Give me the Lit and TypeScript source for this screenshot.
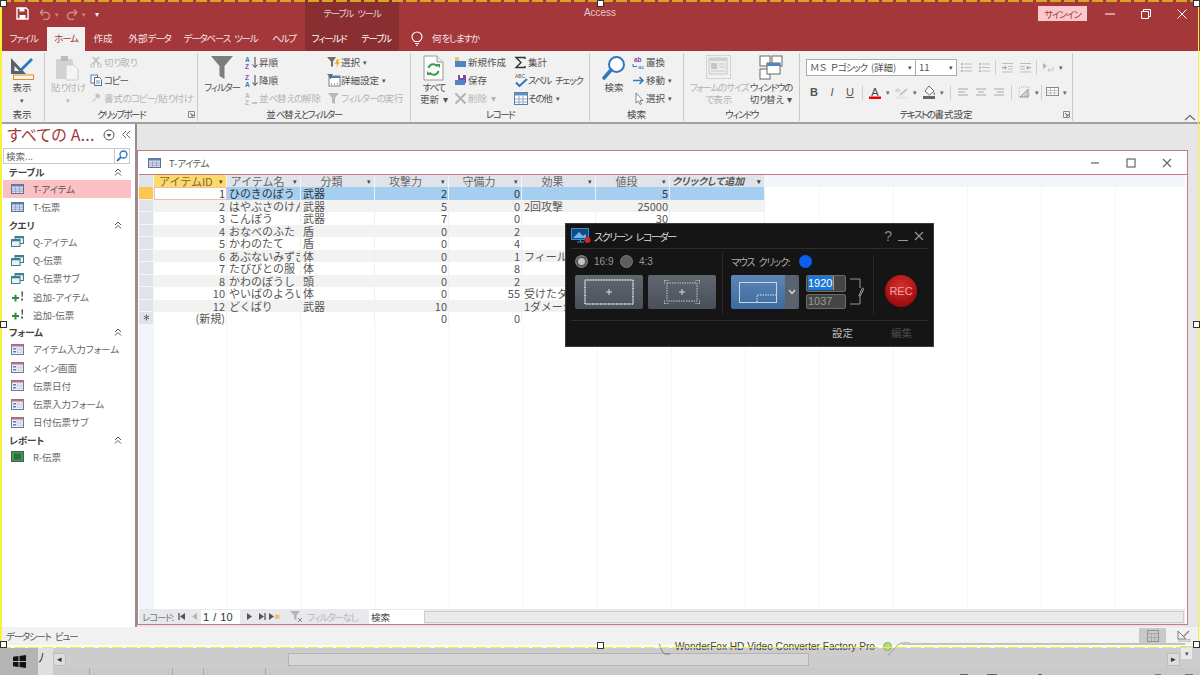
import { LitElement, html, css, svg } from "lit";
import { customElement } from "lit/decorators.js";

const ic = (w: number, h: number, body: any, cls = "") => html`<svg class=${cls} width=${w} height=${h} viewBox="0 0 ${w} ${h}">${body}</svg>`;

/* Kana in the original UI font is much narrower than in Noto: tighten only kana runs. */
const k = (s: string) => s.split(/([\u3040-\u30ff]+)/).map((p, i) => (i % 2 ? html`<span class="k">${p}</span>` : p));

const I = {
  save: ic(13, 13, svg`<path d="M1 1h9l2 2v9H1z" fill="none" stroke="#fff" stroke-width="1.4"/><rect x="3.5" y="1" width="5" height="3.5" fill="#fff"/><rect x="3.5" y="8" width="6" height="4" fill="#fff"/>`),
  undo: ic(14, 12, svg`<path d="M2 4.5h6a3.5 3.5 0 0 1 0 7H5M2 4.5l3-3M2 4.5l3 3" fill="none" stroke="#c98b8c" stroke-width="1.5"/>`),
  redo: ic(14, 12, svg`<path d="M12 4.5H6a3.5 3.5 0 0 0 0 7h3M12 4.5l-3-3M12 4.5l-3 3" fill="none" stroke="#c98b8c" stroke-width="1.5"/>`),
  bulb: ic(12, 15, svg`<path d="M3.5 10.5C2 9 1 8 1 6a5 5 0 0 1 10 0c0 2-1 3-2.5 4.500z" fill="none" stroke="#fff" stroke-width="1.1"/><path d="M4 12.500h4M5 14.300h2" stroke="#fff" stroke-width="1.100"/>`),
  view: ic(26, 26, svg`<path d="M2 3v16h15z M5.500 11v5h5z" fill="#596067" fill-rule="evenodd"/><path d="M11 14 22 3l2 2-11 11-3 1z" fill="#2f79c2"/><rect x="4.500" y="20" width="20" height="4.500" fill="#fff6e6" stroke="#e58a2e"/>`),
  paste: ic(26, 26, svg`<rect x="1" y="4" width="17" height="20" rx="1.500" fill="#d2d2d2"/><rect x="6" y="1" width="7" height="5" fill="#bcbcbc"/><path d="M11 10h8l4 4v11H11z" fill="#f4f4f4" stroke="#cfcfcf"/>`),
  cut: ic(12, 12, svg`<path d="M3 1l6 7M9 1L3 8" stroke="#b8b8b8" stroke-width="1.200"/><circle cx="2.500" cy="9.500" r="1.800" fill="none" stroke="#b8b8b8"/><circle cx="9.500" cy="9.500" r="1.800" fill="none" stroke="#b8b8b8"/>`),
  copy: ic(12, 12, svg`<rect x="1" y="1" width="6.500" height="8" fill="#fff" stroke="#5a7ea3"/><path d="M4.500 3.500h5l2 2v6h-7z" fill="#fff" stroke="#5a6b7d"/><path d="M6 7h4M6 9h4" stroke="#6a8fb5"/>`),
  brush: ic(12, 12, svg`<path d="M7 1l4 3-3 3-3-3z" fill="#c4c4c4"/><path d="M5 5 1 11l5-3z" fill="#d4d4d4"/>`),
  filter: ic(24, 25, svg`<path d="M1 1h22L14.500 11v13l-5-3V11z" fill="#7d7d7d"/>`),
  asc: ic(13, 13, svg`<text x="0" y="6" font-size="6.500" font-weight="700" fill="#2f79c2" font-family="Liberation Sans">A</text><text x="0" y="12.500" font-size="6.500" font-weight="700" fill="#8e4bb5" font-family="Liberation Sans">Z</text><path d="M10 1v10M7.500 8.500 10 11.500l2.500-3" fill="none" stroke="#444"/>`),
  desc: ic(13, 13, svg`<text x="0" y="6" font-size="6.500" font-weight="700" fill="#8e4bb5" font-family="Liberation Sans">Z</text><text x="0" y="12.500" font-size="6.500" font-weight="700" fill="#2f79c2" font-family="Liberation Sans">A</text><path d="M10 1v10M7.500 8.500 10 11.500l2.500-3" fill="none" stroke="#444"/>`),
  clr: ic(13, 13, svg`<text x="0" y="6" font-size="6.500" font-weight="700" fill="#b9b9b9" font-family="Liberation Sans">A</text><text x="0" y="12.500" font-size="6.500" font-weight="700" fill="#b9b9b9" font-family="Liberation Sans">Z</text><path d="M7 11h5" stroke="#c4c4c4" stroke-width="2"/>`),
  fsel: ic(14, 13, svg`<path d="M0 1h9L6 5.500V11L4 10V5.500z" fill="#6f6f6f"/><path d="M10 3 8 8h2l-1 4 4-6h-2l1-3z" fill="#e9b22c"/>`),
  fadv: ic(14, 13, svg`<rect x="2" y="2" width="11" height="10" fill="#fff" stroke="#6c8299"/><rect x="2" y="2" width="11" height="2" fill="#4f7fb0"/><path d="M0 0h6L4 3v2L3 5V3z" fill="#666"/><path d="M4 10h1M7 10h1M10 10h1" stroke="#555"/>`),
  frun: ic(13, 13, svg`<path d="M1 1h11L8 6v6L5 10.500V6z" fill="#b9b9b9"/>`),
  refresh: ic(22, 26, svg`<path d="M1 1h13l6 6v18H1z" fill="#fbfbfb" stroke="#9a9a9a"/><path d="M14 1v6h6" fill="#eee" stroke="#9a9a9a"/><path d="M5.500 13a5 5 0 0 1 9-1.500M15.500 16a5 5 0 0 1-9 1.500" fill="none" stroke="#3d9d4a" stroke-width="2"/><path d="M13 9h4v4zM8 20H4v-4z" fill="#3d9d4a"/>`),
  nw: ic(13, 13, svg`<rect x="1" y="5" width="11" height="6" fill="#4f86c2"/><rect x="1" y="1" width="4" height="4" fill="#e9c46a"/>`),
  sv: ic(13, 13, svg`<rect x="4" y="1" width="8" height="8" fill="#7d4bb0"/><rect x="6" y="1" width="3" height="3" fill="#fff"/><rect x="1" y="6" width="10" height="5" fill="#4f86c2"/>`),
  del: ic(13, 13, svg`<path d="M1.500 1.500l10 10M11.500 1.500l-10 10" stroke="#b0b0b0" stroke-width="1.800"/>`),
  sum: ic(13, 13, svg`<path d="M11 3V1.500H2L7 6.500 2 11.500h9V10" fill="none" stroke="#333" stroke-width="1.400"/>`),
  spell: ic(15, 14, svg`<text x="1" y="5" font-size="5" fill="#555" font-family="Liberation Sans">ABC</text><path d="M2 9.500 5.500 13 13 6" fill="none" stroke="#2f79c2" stroke-width="2"/>`),
  more: ic(14, 13, svg`<rect x=".5" y=".5" width="13" height="12" fill="#fff" stroke="#5f7f9f"/><rect x=".5" y=".5" width="13" height="3" fill="#5f8fbf"/><path d="M5 4v8M9 4v8M1 7h12M1 10h12" stroke="#8fa9c3"/>`),
  find: ic(24, 26, svg`<circle cx="14.500" cy="9.500" r="7.500" fill="#fff" stroke="#2f79c2" stroke-width="2"/><path d="M9 15 2 23" stroke="#2f79c2" stroke-width="3.500" stroke-linecap="round"/>`),
  replace: ic(14, 13, svg`<text x="2" y="5.500" font-size="6.500" font-weight="700" fill="#7d4bb0" font-family="Liberation Sans">ab</text><text x="6" y="12.500" font-size="6" fill="#2f79c2" font-family="Liberation Sans">ac</text><path d="M1 8v2.500h4" fill="none" stroke="#2f79c2"/>`),
  go: ic(14, 13, svg`<path d="M1 6.500h10M7.500 3l3.500 3.500L7.500 10" fill="none" stroke="#2f79c2" stroke-width="1.500"/>`),
  cursor: ic(14, 13, svg`<path d="M4 1v10l2.500-2 1.500 3.500 1.500-.7L8 8.500h3z" fill="#fff" stroke="#666" stroke-width=".8"/>`),
  formfit: ic(26, 25, svg`<rect x=".5" y=".5" width="24" height="23" fill="none" stroke="#c4c4c4" stroke-dasharray="2 1"/><rect x="3" y="3" width="18" height="16" fill="#ececec" stroke="#c8c8c8"/><rect x="3" y="3" width="18" height="3" fill="#cfcfcf"/><rect x="5" y="8" width="6" height="6" fill="#c4c4c4"/><path d="M13 9h6M13 12h6M5 16h14" stroke="#c8c8c8"/>`),
  winsw: ic(24, 25, svg`<rect x="1" y="1" width="10" height="10" fill="#fff" stroke="#666"/><rect x="13" y="1" width="10" height="10" fill="#fff" stroke="#666"/><rect x="1" y="14" width="10" height="10" fill="#fff" stroke="#666"/><rect x="8" y="8" width="13" height="11" fill="#fff" stroke="#666"/><rect x="8" y="8" width="13" height="3" fill="#4f86c2"/>`),
  bul: ic(13, 11, svg`<path d="M4 2h8M4 5.500h8M4 9h8" stroke="#bdbdbd"/><path d="M1 1h2v2H1zM1 4.500h2v2H1zM1 8h2v2H1z" fill="#b9b9b9"/>`),
  ind1: ic(13, 11, svg`<path d="M1 1.500h11M7 4.500h5M7 7h5M1 10h11" stroke="#bdbdbd"/><path d="M1 5.700h4M3.500 4 5.500 5.700 3.500 7.500" fill="none" stroke="#7f9fbf"/>`),
  ind2: ic(13, 11, svg`<path d="M1 1.500h11M1 4.500h5M1 7h5M1 10h11" stroke="#bdbdbd"/><path d="M12 5.700H8M9.500 4 7.500 5.700 9.500 7.500" fill="none" stroke="#7f9fbf"/>`),
  rtl: ic(13, 11, svg`<path d="M1 1l4 3-4 3z" fill="#b5b5b5"/><path d="M11 5v3H6M7.500 6 6 8l1.500 2" fill="none" stroke="#c4c4c4"/>`),
  fcolor: ic(14, 13, svg`<text x="7" y="9.500" text-anchor="middle" font-size="11" fill="#444" font-family="Liberation Sans">A</text><rect x="1" y="10.500" width="12" height="2.500" fill="#e00"/>`),
  hl: ic(14, 13, svg`<text x="0" y="6" font-size="5" fill="#bbb" font-family="Liberation Sans">ab</text><path d="M5 9l7-6" stroke="#c4c4c4" stroke-width="2"/><rect x="1" y="10.500" width="12" height="2.500" fill="#e9e3ea"/>`),
  fill: ic(14, 14, svg`<path d="M7 1l5 5-4.500 4L3 6z" fill="#fff" stroke="#666"/><path d="M12 7c1 1.500 1.500 2 .7 2.800-.8.500-1.500-.3-.7-2.800z" fill="#2f79c2"/><rect x="1" y="11" width="12" height="3" fill="#666"/>`),
  al1: ic(12, 11, svg`<path d="M1 2h10M1 5h7M1 8h10" stroke="#aaa" stroke-width="1.100"/>`),
  al2: ic(12, 11, svg`<path d="M1 2h10M3 5h6M1 8h10" stroke="#aaa" stroke-width="1.100"/>`),
  al3: ic(12, 11, svg`<path d="M1 2h10M4 5h7M1 8h10" stroke="#aaa" stroke-width="1.100"/>`),
  gl: ic(12, 12, svg`<path d="M1 1h10v10H1z" fill="none" stroke="#b8b8b8" stroke-dasharray="1 1"/><path d="M2 11 10 3v8z" fill="#cfcfcf" stroke="#777" stroke-width=".6"/>`),
  alt: ic(13, 11, svg`<rect x=".5" y=".5" width="12" height="8" fill="#fff" stroke="#888"/><path d="M.5 3.500h12M.5 6h12M4.500 1v8M8.500 1v8" stroke="#aaa" stroke-width=".7"/>`),
  launch: ic(7, 7, svg`<path d="M.5 .5h6v6h-6z" fill="none" stroke="#8a8a8a"/><path d="M2 2l3 3M5 3v2H3" fill="none" stroke="#666"/>`),
  chev: ic(12, 7, svg`<path d="M1 6l5-4.500L11 6" fill="none" stroke="#666" stroke-width="1.100"/>`),
  minW: ic(10, 10, svg`<path d="M0 5h10" stroke="#fff"/>`),
  resW: ic(10, 10, svg`<path d="M.5 2.500h7v7h-7zM2.500 2.500v-2h7v7h-2" fill="none" stroke="#fff"/>`),
  closeW: ic(10, 10, svg`<path d="M.5 .5l9 9M9.500 .5l-9 9" stroke="#fff"/>`),
  minK: ic(10, 10, svg`<path d="M1 5h8" stroke="#666" stroke-width="1.200"/>`),
  maxK: ic(10, 10, svg`<rect x="1" y="1" width="8" height="8" fill="none" stroke="#666" stroke-width="1.200"/>`),
  closeK: ic(10, 10, svg`<path d="M1 1l8 8M9 1l-8 8" stroke="#666" stroke-width="1.100"/>`),
  closeD: ic(10, 10, svg`<path d="M1 1l8 8M9 1l-8 8" stroke="#999" stroke-width="1.100"/>`),
  tbl: ic(13, 10, svg`<rect x=".5" y=".5" width="12" height="9" fill="#d8def0" stroke="#5f6f92"/><rect x=".5" y=".5" width="12" height="2" fill="#5f7fae"/><path d="M4.500 2.500v7M8.500 2.500v7M1 5h11M1 7.300h11" stroke="#8a9ac0" stroke-width=".7"/>`),
  qry: ic(13, 11, svg`<rect x="4" y=".5" width="8.500" height="7" fill="#e8f2f4" stroke="#3e7f8e"/><rect x="4" y=".5" width="8.500" height="1.800" fill="#3e7f8e"/><rect x=".5" y="3.500" width="8.500" height="7" fill="#e8f2f4" stroke="#3e7f8e"/><rect x=".5" y="3.500" width="8.500" height="1.800" fill="#3e7f8e"/>`),
  app: ic(13, 11, svg`<path d="M3 3h2.500V.8h2V3H10v2H7.500v2.500h-2V5H3z" fill="#2f8a3d" transform="translate(-2 3)"/><path d="M10.500 .5 12 .5 11.500 6h-.8z M10.300 7.500h1.500v2h-1.500z" fill="#333"/>`),
  frm: ic(13, 11, svg`<rect x=".5" y=".5" width="12" height="10" fill="#eef1f7" stroke="#6a7a9a"/><rect x=".5" y=".5" width="12" height="2" fill="#c26a86"/><rect x="2" y="4" width="3" height="1.500" fill="#5f7fae"/><rect x="2" y="7" width="3" height="1.500" fill="#5f7fae"/><rect x="6" y="4" width="5" height="1.500" fill="#fff" stroke="#8a9ac0" stroke-width=".4"/><rect x="6" y="7" width="5" height="1.500" fill="#fff" stroke="#8a9ac0" stroke-width=".4"/>`),
  rpt: ic(13, 11, svg`<rect x=".5" y=".5" width="12" height="10" fill="#3f9a52" stroke="#555"/><rect x="3" y="2.500" width="7" height="6" fill="#2c6f3b"/>`),
  magS: ic(12, 12, svg`<circle cx="7.500" cy="4.500" r="3.500" fill="#fff" stroke="#2f79c2" stroke-width="1.300"/><path d="M5 7 1 11" stroke="#2f79c2" stroke-width="1.800"/>`),
  ddC: ic(12, 12, svg`<circle cx="6" cy="6" r="5" fill="none" stroke="#555"/><path d="M3.500 5h5L6 8z" fill="#555"/>`),
  dbl: ic(10, 9, svg`<path d="M5 1 1.500 4.500 5 8M9 1 5.500 4.500 9 8" fill="none" stroke="#666"/>`),
  dblUp: ic(8, 8, svg`<path d="M1 4l3-3 3 3M1 7.500l3-3 3 3" fill="none" stroke="#555"/>`),
  star: ic(7, 7, svg`<path d="M3.500 .5v6M.8 2l5.400 3M6.200 2 .8 5" stroke="#666"/>`),
  win: ic(13, 13, svg`<path d="M0 1.800 5.500 1v5H0zM6.500 .9 13 0v6H6.500zM0 7h5.500v5L0 11.200zM6.500 7H13v6l-6.500-.9z" fill="#111"/>`),
  first: ic(8, 7, svg`<path d="M1 0v7" stroke="#555" stroke-width="1.300"/><path d="M7 0v7L2 3.500z" fill="#555"/>`),
  prev: ic(6, 7, svg`<path d="M5 0v7L0 3.500z" fill="#b5b5b5"/>`),
  next: ic(6, 7, svg`<path d="M1 0v7l5-3.500z" fill="#555"/>`),
  last: ic(8, 7, svg`<path d="M1 0v7l5-3.500z" fill="#555"/><path d="M7 0v7" stroke="#555" stroke-width="1.300"/>`),
  newr: ic(11, 7, svg`<path d="M0 0v7l5-3.500z" fill="#555"/><rect x="6" y="1.500" width="4.500" height="4.500" fill="#f0c070"/>`),
  fno: ic(13, 12, svg`<path d="M0 0h10L6.500 4.500V9L4 8V4.500z" fill="#b5b5b5"/><path d="M8 7l4 4M12 7l-4 4" stroke="#888"/>`),
  ds: ic(12, 12, svg`<rect x=".5" y=".5" width="11" height="11" fill="none" stroke="#8f8f8f"/><path d="M.5 3.500h11M4.500 3.500v8M8 3.500v8M.5 7.500h11" stroke="#9f9f9f" stroke-width=".7"/>`),
  ds2: ic(14, 12, svg`<path d="M1 1v8h8z" fill="none" stroke="#7d7d7d"/><path d="M6 7 12 1" stroke="#8a8a8a" stroke-width="1.500"/><rect x="2" y="9.500" width="11" height="2.500" fill="#ddd" stroke="#999" stroke-width=".5"/>`),
  rec: ic(21, 16, svg`<rect x=".5" y=".5" width="17" height="11" fill="#174a7c" stroke="#2f8fe0"/><path d="M2 10 8 4l4 4 3-2v4z" fill="#6fb7ef"/><path d="M6 14h7M9.500 12v2" stroke="#2f8fe0"/><circle cx="16.500" cy="12" r="3" fill="#d0242a"/>`),
  area1: ic(50, 26, svg`<rect x="1" y="1" width="48" height="24" fill="none" stroke="#c8c8c8" stroke-width="2" stroke-dasharray="1 .6"/><path d="M22 13h6M25 10v6" stroke="#ddd"/>`),
  area2: ic(36, 24, svg`<rect x="3" y="3" width="30" height="18" fill="none" stroke="#c8c8c8" stroke-dasharray="1.500 1"/><path d="M0 4V0h5M31 0h5v4M36 20v4h-5M5 24H0v-4" fill="none" stroke="#ccc"/><path d="M15 12h6M18 9v6" stroke="#ddd"/>`),
  split: ic(38, 21, svg`<rect x=".5" y=".5" width="37" height="20" fill="none" stroke="#c8d4e2"/><path d="M18 20v-7h19.500" fill="none" stroke="#dde4ec" stroke-dasharray="1.500 1"/>`),
  dchev: ic(8, 6, svg`<path d="M1 1l3 3.500L7 1" fill="none" stroke="#ddd" stroke-width="1.300"/>`),
  bracket: ic(18, 28, svg`<path d="M1 1h10v9M1 26h10v-9" fill="none" stroke="#999"/><path d="M10 17.500l3-7c1-1 2 0 1.500 1l-3 6c-.7 1-2 .8-1.500 0z" fill="none" stroke="#aaa"/>`),
  tabL: ic(12, 12, svg`<path d="M1 0c2 3 2 8 6 10h5" fill="none" stroke="#666" stroke-width=".8"/>`),
  tabR: ic(22, 14, svg`<path d="M0 13C5 10 8 2 14 1h8" fill="none" stroke="#9a9a9a" stroke-width="1"/>`),
};

const big = (icon: any, lines: string[], arrow: boolean, cls: string, dim = false) => html`
  <div class="big ${cls} ${dim ? "dim" : ""}">
    <div class="bigi">${icon}</div>
    ${lines.map((l) => html`<div class="bl">${k(l)}</div>`)}
    ${arrow ? html`<div class="car">▾</div>` : ""}
  </div>`;
const small = (icon: any, label: string, arrow = false, dim = false) => html`
  <div class="sm ${dim ? "dim" : ""}"><span class="smi">${icon}</span><span>${k(label)}</span>${arrow ? html`<span class="ca">▾</span>` : ""}</div>`;
const tb = (icon: any, arrow = false) => html`<span class="tb">${icon}</span>${arrow ? html`<span class="ca2">▾</span>` : ""}`;

const group = (title: string, body: any, cls: string, launcher = false) => html`
  <section class="grp">
    <div class="gbody ${cls}">${body}</div>
    <div class="gt">${k(title)}${launcher ? html`<span class="launch">${I.launch}</span>` : ""}</div>
  </section>`;

type NavItem = { h?: string; i?: any; t?: string; sel?: boolean };
const nav: NavItem[] = [
  { h: "テーブル" }, { i: I.tbl, t: "T-アイテム", sel: true }, { i: I.tbl, t: "T-伝票" },
  { h: "クエリ" }, { i: I.qry, t: "Q-アイテム" }, { i: I.qry, t: "Q-伝票" }, { i: I.qry, t: "Q-伝票サブ" }, { i: I.app, t: "追加-アイテム" }, { i: I.app, t: "追加-伝票" },
  { h: "フォーム" }, { i: I.frm, t: "アイテム入力フォーム" }, { i: I.frm, t: "メイン画面" }, { i: I.frm, t: "伝票日付" }, { i: I.frm, t: "伝票入力フォーム" }, { i: I.frm, t: "日付伝票サブ" },
  { h: "レポート" }, { i: I.rpt, t: "R-伝票" },
];

const heads = ["アイテムID", "アイテム名", "分類", "攻撃力", "守備力", "効果", "値段", "クリックして追加"];
const rows: string[][] = [
  ["1", "ひのきのぼう", "武器", "2", "0", "", "5"],
  ["2", "はやぶさのけん", "武器", "5", "0", "2回攻撃", "25000"],
  ["3", "こんぼう", "武器", "7", "0", "", "30"],
  ["4", "おなべのふた", "盾", "0", "2", "", ""],
  ["5", "かわのたて", "盾", "0", "4", "", ""],
  ["6", "あぶないみずぎ", "体", "0", "1", "フィールド", ""],
  ["7", "たびびとの服", "体", "0", "8", "", ""],
  ["8", "かわのぼうし", "頭", "0", "2", "", ""],
  ["10", "やいばのよろい", "体", "0", "55", "受けたダメージ", ""],
  ["12", "どくばり", "武器", "10", "", "1ダメージ", ""],
  ["(新規)", "", "", "0", "0", "", ""],
];
const rightCols = [0, 3, 4, 6];

@customElement("app-root")
export class AppRoot extends LitElement {
  static styles = css`
    :host { display: block; width: 1200px; height: 675px; position: relative; overflow: hidden; background: #e6e6e6;
      font-family: "Noto Sans CJK JP", "Noto Sans", sans-serif; font-size: 9.5px; color: #505050; font-feature-settings: "palt"; word-spacing: 2px; }
    * { box-sizing: border-box; }
    svg { display: block; flex: none; }
    .k { letter-spacing: -1.2px; }
    .app { display: grid; grid-template-rows: 27px 24px 73px 503px 18px 30px; height: 675px; }

    .title { display: flex; background: #a4373a; color: #fff; }
    .qat { width: 305px; display: flex; align-items: center; padding-left: 16px; }
    .qat svg { margin-right: 3px; }
    .qat .gap9 { width: 6px; }
    .qat .sp { width: 10px; color: #c98b8c; font-size: 7px; }
    .qat .d { color: #eee; font-size: 8px; margin-left: 3px; }
    .tool { width: 94px; background: #8a2f31; display: flex; align-items: center; justify-content: center; color: #e6cfd0; font-size: 9.5px; padding-bottom: 2px; }
    .apptitle { width: 402px; display: flex; align-items: center; justify-content: center; color: #e6c8c9; font-size: 10px; font-family: "Liberation Sans", sans-serif; padding-bottom: 2px; }
    .right { flex: 1; display: flex; align-items: center; padding-left: 237px; }
    .signin { width: 49px; height: 15px; background: #fbc8cb; color: #a4373a; font-size: 9.5px; display: flex; align-items: center; justify-content: center; margin-right: 5px; }
    .wb { width: 36px; display: flex; justify-content: center; }

    .tabs { display: grid; grid-template-columns: 47px 38px 36px 57px 85px 42px 48px 46px 1fr; background: #a4373a; color: #f6e6e6; }
    .tab { display: flex; align-items: center; justify-content: center; font-size: 9.5px; padding-bottom: 2px; white-space: pre; }
    .tab.on { background: #f1f1f1; color: #a4373a; }
    .tab.ctx { background: #8a2f31; color: #fff; }
    .tell { display: flex; align-items: center; padding-left: 12px; gap: 9px; font-size: 9.5px; padding-bottom: 2px; }

    .ribbon { display: grid; grid-template-columns: 45px 153px 213px 179px 94px 116px 273px 1fr; background: #f1f1f1; border-bottom: 2px solid #a0a0a0; position: relative; }
    .grp { margin: 2px 0 1px; border-right: 1px solid #c9c9c9; display: grid; grid-template-rows: 1fr 13px; min-width: 0; }
    .gbody { display: flex; min-width: 0; }
    .gt { text-align: center; font-size: 9.5px; line-height: 13px; position: relative; color: #444; }
    .gt .k { letter-spacing: -1.5px; }
    .launch { position: absolute; right: 2px; top: 3px; }
    .big { display: flex; flex-direction: column; align-items: center; line-height: 11.5px; font-size: 9.5px; white-space: nowrap; }
    .bigi { height: 29px; padding-top: 2px; }
    .car { font-size: 7px; line-height: 9px; color: #555; margin-top: 2px; }
    .bl { height: 11.5px; }
    .dim { color: #b4b4b4; }
    .dim .car { color: #b4b4b4; }
    .col { display: grid; grid-template-rows: repeat(3, 18px); }
    .sm { display: flex; align-items: center; white-space: nowrap; font-size: 9.5px; }
    .smi { width: 14px; flex: none; }
    .ca { font-size: 7px; margin-left: 3px; color: #555; }
    .g-view { justify-content: center; }
    .w-view { width: 44px; }
    .g-clip { padding-left: 7px; gap: 6px; }
    .w-32 { width: 32px; }
    .g-sort { padding-left: 8px; }
    .g-sort .col:nth-child(2) { width: 82px; margin-left: 7px; }
    .g-rec { padding-left: 10px; }
    .w-26 { width: 26px; }
    .g-rec .c1 { width: 60px; margin-left: 7px; }
    .g-find { padding-left: 11px; }
    .g-find .col { margin-left: 5px; }
    .g-win { padding-left: 2px; }
    .w-66 { width: 66px; }
    .w-38 { width: 38px; }
    .g-text { flex-direction: column; padding-left: 6px; }
    .tr1 { display: flex; align-items: center; height: 18px; margin-top: 5px; }
    .tr2 { display: flex; align-items: center; height: 18px; margin-top: 7px; margin-left: -1px; }
    .fsel { width: 110px; height: 17px; background: #fff; border: 1px solid #ababab; display: flex; align-items: center; justify-content: space-between; padding: 0 3px; font-size: 9.5px; }
    .fsize { width: 42px; margin-left: -1px; }
    .fsel i { font-style: normal; font-size: 7px; }
    .tb { width: 18px; display: flex; justify-content: center; align-items: center; font-family: "Liberation Sans", sans-serif; font-size: 11px; color: #555; flex: none; }
    .tb.b { font-weight: 700; }
    .tb.ii { font-style: italic; }
    .tb.u { text-decoration: underline; }
    .ca2 { font-size: 7px; color: #666; width: 10px; text-align: center; flex: none; margin-left: -1px; }
    .tsep { width: 1px; height: 15px; background: #d0d0d0; margin: 0 3px; flex: none; }
    .tsep.m2 { margin: 0 2px; }
    .tsep.tight { margin: 0 1px 0 -1px; }
    .collapse { position: absolute; right: 4px; bottom: 1px; }

    .main { display: flex; min-height: 0; }
    .nav { width: 137px; background: #fff; border-right: 2px solid #8f8f8f; padding: 1px 4px 0 3px; overflow: hidden; }
    .navh { display: flex; align-items: center; height: 19px; padding-left: 4px; }
    .navh b { font-weight: 400; color: #a4373a; font-size: 16px; width: 96px; white-space: nowrap; line-height: 19px; word-spacing: 0; letter-spacing: .2px; }
    .navh svg:nth-of-type(1) { margin-right: 6px; }
    .navs { margin-top: 4px; height: 16px; width: 127px; border: 1px solid #c8c8c8; display: flex; align-items: center; justify-content: space-between; padding: 0 1px 0 2px; font-size: 9.5px; color: #666; }
    .navs span:last-child { border-left: 1px solid #c8c8c8; height: 14px; padding: 1px 0 0 1px; }
    .nh { height: 16px; display: flex; align-items: center; justify-content: space-between; padding: 0 9px 0 6px; font-weight: 700; font-size: 9.5px; color: #444; }
    .ni { height: 18.3px; display: flex; align-items: center; padding-left: 8px; gap: 9px; font-size: 9.5px; color: #666; width: 128px; }
    .ni.sel { background: #fbc0c3; color: #555; }

    .mdi { flex: 1; padding: 26px 12px 2px 0; min-width: 0; }
    .win { height: 475px; border: 1px solid #c77a7d; background: #fff; display: grid; grid-template-rows: 24px 1fr 15px; padding: 0 2px 0 1px; }
    .wint { display: flex; align-items: center; padding-left: 9px; gap: 8px; font-size: 9.5px; color: #555; border-bottom: 1px solid #c77a7d; margin: 0 -2px 0 0; }
    .wint .k { letter-spacing: -.5px; }
    .wint .ctl { margin-left: auto; display: flex; padding-right: 2px; }
    .wint .ctl span { width: 36px; display: flex; justify-content: center; }
    .sheet { min-height: 0; overflow: hidden;
      background:
        linear-gradient(#f3f5fc, #f3f5fc) 0 0 / 100% 12px no-repeat,
        linear-gradient(#f3f5fc, #f3f5fc) 0 0 / 15px 100% no-repeat,
        repeating-linear-gradient(90deg, transparent 0 73px, #f5f5f5 73px 74px) 15px 0,
        #fff; }
    .grid { display: grid; grid-template-columns: 15px 73px 74px 74px 74px 73px 74px 74px 95px; width: 626px; font-size: 11px; font-feature-settings: normal; line-height: 12.5px; color: #555; background: #fff; word-spacing: 0; }
    .hc { height: 12px; background: #e0e4ea; border-right: 1px solid #f4f4f4; display: flex; align-items: center; justify-content: center; position: relative; white-space: nowrap; font-size: 11px; color: #666; padding-right: 12px; }
    .hc.act { background: #fdd968; color: #7a6a3a; justify-content: flex-start; padding-left: 5px; }
    .hc.add { font-style: italic; font-weight: 700; font-size: 10px; color: #555; justify-content: flex-start; padding-left: 2px; font-feature-settings: "palt"; }
    .hc i { position: absolute; right: 3px; top: 2px; font-size: 7px; font-style: normal; color: #444; line-height: 9px; }
    .corner { height: 12px; background: #e0e4ea; border-right: 1px solid #f4f4f4; }
    .rs { height: 12.5px; background: #e0e4ea; border-bottom: 1px solid #f4f4f4; border-right: 1px solid #f4f4f4; display: flex; align-items: center; justify-content: center; }
    .rs.cur { background: #fcc74e; }
    .c { height: 12.5px; overflow: hidden; white-space: nowrap; padding: 0 1px 0 2px; border-right: 1px solid #f0f0f0; }
    .c.r { text-align: right; }
    .c.alt { background: #f2f2f1; }
    .c.sel { background: #a4cff0; color: #333; }
    .c.cur { background: #fff; outline: 1px solid #f3b8ba; outline-offset: -1px; color: #444; }
    .rec { display: flex; align-items: center; background: #e8e9ec; font-size: 9.5px; color: #777; height: 15px; white-space: nowrap; }
    .rec .lb { padding-left: 3px; width: 36px; }
    .rec .nb { width: 13px; display: flex; justify-content: center; }
    .rec .cnt { width: 39px; height: 14px; background: #fff; color: #333; font-family: "Liberation Sans", sans-serif; font-size: 11px; padding-left: 2px; line-height: 15px; margin: 0 2px 0 0; word-spacing: 1px; }
    .rec .nf { display: flex; align-items: center; gap: 4px; color: #b5b5b5; margin-left: 9px; width: 79px; }
    .rec .srch { width: 55px; height: 14px; background: #fff; color: #444; padding-left: 2px; line-height: 14px; }
    .rec .sb { flex: 1; height: 12px; border: 1px solid #cfcfcf; background: #eaeaea; margin-right: 1px; }

    .status { background: #f1f1f1; display: flex; align-items: center; padding-left: 6px; font-size: 9.5px; color: #555; }
    .status .v1 { margin-left: auto; width: 27px; height: 16px; background: #c9c9c9; display: flex; align-items: center; justify-content: center; margin-right: 7px; }
    .status .v2 { width: 22px; display: flex; justify-content: center; margin-right: 5px; }

    .task { background: #c9c9c9; position: relative; display: grid; grid-template-rows: 3px 20px 7px; }
    .tasktop { background: #fff; }
    .taskmid { display: flex; align-items: stretch; background: #ccc; }
    .start { width: 38px; background: #b4b4b4; display: flex; align-items: center; justify-content: center; margin-bottom: -7px; }
    .srch2 { width: 15px; background: #dfdfdf; color: #333; font-size: 13px; line-height: 18px; overflow: hidden; margin-bottom: -7px; }
    .arr { width: 13px; height: 13px; margin-top: 5px; background: #dcdcdc; border: 1px solid #bdbdbd; font-size: 9px; line-height: 10px; text-align: center; color: #333; flex: none; }
    .track { flex: 1; display: flex; padding: 5px 0 2px 222px; }
    .thumb { width: 521px; background: #d6d6d6; border: 1px solid #b4b4b4; }
    .taskend { width: 20px; }
    .ticks { background:
        linear-gradient(#666, #666) 960px 6px / 8px 1px no-repeat,
        linear-gradient(#666, #666) 987px 6px / 10px 1px no-repeat,
        linear-gradient(#666, #666) 1038px 6px / 4px 1px no-repeat,
        linear-gradient(#777, #777) 1155px 6px / 6px 1px no-repeat,
        linear-gradient(#777, #777) 1185px 6px / 8px 1px no-repeat,
        linear-gradient(#aaa, #aaa) 89px 0 / 1px 7px no-repeat,
        linear-gradient(#aaa, #aaa) 172px 0 / 1px 7px no-repeat,
        linear-gradient(#aaa, #aaa) 203px 0 / 1px 7px no-repeat,
        linear-gradient(#aaa, #aaa) 265px 0 / 1px 7px no-repeat; }
    .wf { position: absolute; left: 675px; top: -4px; font-family: "Liberation Sans", sans-serif; font-size: 10.1px; color: #444; white-space: nowrap; display: flex; align-items: center; gap: 8px; word-spacing: 0; }
    .wf i { width: 9px; height: 9px; border-radius: 50%; background: #b4dc8c; border: 1px solid #7fb35a; }
    .tabline { position: absolute; left: 902px; top: -2px; width: 283px; height: 2px; background: #c2c2c2; }
    .tl { position: absolute; left: 658px; top: -1px; }
    .tr { position: absolute; left: 888px; top: -3px; }
    .dd { position: absolute; left: 1180px; top: 1px; width: 13px; height: 14px; background: #e9e9e9; border: 1px solid #cfcfcf; font-size: 7px; text-align: center; line-height: 12px; color: #555; }

    .dlg { position: absolute; left: 565px; top: 223px; width: 369px; height: 124px; background: #151515; border: 1px solid #3a3a3a; color: #d0d0d0; display: grid; grid-template-rows: 25px 72px 1fr; padding: 0 5px; }
    .dt { display: flex; align-items: center; border-bottom: 1px solid #2d2d2d; font-size: 10px; gap: 2px; color: #ddd; }
    .dt .k { letter-spacing: -1.4px; }
    .dt .q { margin-left: auto; display: flex; align-items: center; gap: 6px; color: #888; font-size: 14px; line-height: 14px; font-family: "Liberation Sans", sans-serif; padding-right: 4px; }
    .dt .ln { width: 10px; height: 1px; background: #999; margin-top: 8px; }
    .dm { display: flex; border-bottom: 1px solid #2d2d2d; padding-left: 4px; }
    .left { width: 148px; border-right: 1px solid #2a2a2a; margin: 3px 0 6px; }
    .ropts { display: flex; align-items: center; height: 18px; font-size: 10px; color: #999; font-family: "Liberation Sans", sans-serif; }
    .radio { width: 13px; height: 13px; border-radius: 50%; background: #5e5e5e; border: 1px solid #777; flex: none; }
    .radio.on { background: #c4c4c4; box-shadow: inset 0 0 0 2px #555; }
    .ropts .o1 { margin: 0 6px 0 6px; width: 20px; }
    .ropts .o2 { margin-left: 6px; }
    .btns { display: flex; gap: 5px; margin-top: 5px; }
    .abtn { height: 34px; background: linear-gradient(#5f6771, #4a505a); border-radius: 2px; display: flex; align-items: center; justify-content: center; }
    .w68 { width: 68px; }
    .mid { width: 150px; padding-left: 8px; margin-top: 3px; }
    .mouse { display: flex; align-items: center; height: 18px; font-size: 10px; color: #aaa; gap: 8px; }
    .mouse i { width: 13px; height: 13px; border-radius: 50%; background: #0a5ff0; }
    .midrow { display: flex; margin-top: 5px; }
    .spl { width: 68px; height: 34px; display: flex; border-radius: 2px; overflow: hidden; flex: none; }
    .spl .a { width: 54px; background: linear-gradient(#5d86b8, #3d6aa0); display: flex; align-items: center; justify-content: center; }
    .spl .b { flex: 1; background: #5a626d; display: flex; align-items: center; justify-content: center; }
    .dims { width: 40px; margin-left: 7px; display: grid; grid-template-rows: 17px 15px; gap: 2px; flex: none; }
    .dim1, .dim2 { background: #454545; border: 1px solid #6a6a6a; border-radius: 2px; font-family: "Liberation Sans", sans-serif; font-size: 11px; line-height: 15px; color: #999; padding-left: 1px; }
    .dim1 span { background: #1c78d8; color: #fff; border-right: 1px solid #e8843a; padding-right: 1px; display: inline-block; line-height: 14px; }
    .dim2 { line-height: 13px; }
    .brk { margin: 3px 0 0 3px; }
    .recwrap { flex: 1; border-left: 1px solid #2a2a2a; margin: 6px 0; display: flex; align-items: flex-start; justify-content: center; padding-top: 20px; }
    .recb { width: 32px; height: 32px; border-radius: 50%; background: radial-gradient(circle at 50% 35%, #d8302e, #9c0c0c 75%); color: #e8a8a8; font-family: "Liberation Sans", sans-serif; font-size: 11px; display: flex; align-items: center; justify-content: center; }
    .db { display: flex; align-items: center; font-size: 10.5px; padding-left: 261px; padding-bottom: 2px; }
    .db .set { width: 59px; color: #bbb; }
    .db .ed { color: #4a4a4a; }

    .hd { position: absolute; width: 7px; height: 7px; background: #fff; border: 1px solid #333; }
    .h1 { left: 0; top: 0; } .h2 { left: 597px; top: 0; } .h3 { left: 1193px; top: 0; }
    .h4 { left: 0; top: 321px; } .h5 { left: 1193px; top: 321px; }
    .h6 { left: 0; top: 641px; } .h7 { left: 597px; top: 642px; } .h8 { left: 1193px; top: 641px; }
    .dashT { position: absolute; left: 0; right: 0; top: 0; height: 2px; background: repeating-linear-gradient(90deg, #d9a520 0 11px, transparent 11px 14px); }
    .dashB { position: absolute; left: 0; right: 0; top: 647px; height: 1px; background: repeating-linear-gradient(90deg, #f2ee30 0 11px, transparent 11px 14px); }
    .lineL { position: absolute; left: 0; top: 0; width: 2px; height: 645px; background: #f7f23a; }
    .lineR { position: absolute; left: 1198px; top: 0; width: 1px; height: 645px; background: #f7f23a; }
  `;

  render() {
    return html`
    <div class="app">
      <div class="title">
        <div class="qat">${I.save}<span class="gap9"></span>${I.undo}<span class="sp">▾</span>${I.redo}<span class="sp">▾</span><span class="d">▾</span></div>
        <div class="tool"><span>${k("テーブル ツール")}</span></div>
        <div class="apptitle">Access</div>
        <div class="right"><div class="signin"><span>${k("サインイン")}</span></div><span class="wb">${I.minW}</span><span class="wb">${I.resW}</span><span class="wb">${I.closeW}</span></div>
      </div>
      <div class="tabs">
        ${["ファイル", "ホーム", "作成", "外部データ", "データベース ツール", "ヘルプ"].map((t, i) => html`<div class="tab ${i === 1 ? "on" : ""}"><span>${k(t)}</span></div>`)}
        <div class="tab ctx"><span>${k("フィールド")}</span></div><div class="tab ctx"><span>${k("テーブル")}</span></div>
        <div class="tell">${I.bulb}<span>${k("何をしますか")}</span></div>
      </div>
      <div class="ribbon">
        ${group("表示", big(I.view, ["表示"], true, "w-view"), "g-view")}
        ${group("クリップボード", html`${big(I.paste, ["貼り付け"], true, "w-32", true)}
          <div class="col">${small(I.cut, "切り取り", false, true)}${small(I.copy, "コピー")}${small(I.brush, "書式のコピー/貼り付け", false, true)}</div>`, "g-clip", true)}
        ${group("並べ替えとフィルター", html`${big(I.filter, ["フィルター"], false, "w-32")}
          <div class="col">${small(I.asc, "昇順")}${small(I.desc, "降順")}${small(I.clr, "並べ替えの解除", false, true)}</div>
          <div class="col">${small(I.fsel, "選択", true)}${small(I.fadv, "詳細設定", true)}${small(I.frun, "フィルターの実行", false, true)}</div>`, "g-sort")}
        ${group("レコード", html`${big(I.refresh, ["すべて", "更新 ▾"], false, "w-26")}
          <div class="col c1">${small(I.nw, "新規作成")}${small(I.sv, "保存")}${small(I.del, "削除 ▾", false, true)}</div>
          <div class="col">${small(I.sum, "集計")}${small(I.spell, "スペル チェック")}${small(I.more, "その他", true)}</div>`, "g-rec")}
        ${group("検索", html`${big(I.find, ["検索"], false, "w-26")}
          <div class="col">${small(I.replace, "置換")}${small(I.go, "移動", true)}${small(I.cursor, "選択", true)}</div>`, "g-find")}
        ${group("ウィンドウ", html`${big(I.formfit, ["フォームのサイズ", "で表示"], false, "w-66", true)}${big(I.winsw, ["ウィンドウの", "切り替え ▾"], false, "w-38")}`, "g-win")}
        ${group("テキストの書式設定", html`
          <div class="tr1"><div class="fsel"><span>ＭＳ Ｐ${k("ゴシック")} (詳細)</span><i>▾</i></div><div class="fsel fsize"><span>11</span><i>▾</i></div>
            ${tb(I.bul)}${tb(I.bul)}<span class="tsep m2"></span>${tb(I.ind1)}${tb(I.ind2)}<span class="tsep m2"></span>${tb(I.rtl)}<span class="ca2 dim">▾</span></div>
          <div class="tr2"><span class="tb b">B</span><span class="tb ii">I</span><span class="tb u">U</span><span class="tsep"></span>
            ${tb(I.fcolor, true)}${tb(I.hl)}<span class="ca2 dim">▾</span>${tb(I.fill, true)}<span class="tsep"></span>${tb(I.al1)}${tb(I.al2)}${tb(I.al3)}<span class="tsep"></span>${tb(I.gl, true)}<span class="tsep tight"></span>${tb(I.alt, true)}</div>`, "g-text", true)}
        <div class="collapse">${I.chev}</div>
      </div>
      <div class="main">
        <aside class="nav">
          <div class="navh"><b>すべての A...</b>${I.ddC}${I.dbl}</div>
          <div class="navs"><span>検索...</span><span>${I.magS}</span></div>
          <div>
            ${nav.map((n) => n.h
              ? html`<div class="nh"><span>${n.h}</span>${I.dblUp}</div>`
              : html`<div class="ni ${n.sel ? "sel" : ""}">${n.i}<span>${n.t}</span></div>`)}
          </div>
        </aside>
        <div class="mdi">
          <div class="win">
            <div class="wint">${I.tbl}<span>${k("T-アイテム")}</span><div class="ctl"><span>${I.minK}</span><span>${I.maxK}</span><span>${I.closeK}</span></div></div>
            <div class="sheet">
              <div class="grid">
                <div class="corner"></div>
                ${heads.map((h, i) => html`<div class="hc ${i === 0 ? "act" : ""} ${i === 7 ? "add" : ""}">${h}<i>▾</i></div>`)}
                ${rows.map((r, ri) => html`
                  <div class="rs ${ri === 0 ? "cur" : ""}">${ri === 10 ? I.star : ""}</div>
                  ${r.map((v, ci) => html`<div class="c ${rightCols.includes(ci) ? "r" : ""} ${ri === 0 ? (ci === 0 ? "cur" : "sel") : ri % 2 === 1 && ri < 10 ? "alt" : ""}">${v}</div>`)}
                  <div class="c ${ri === 0 ? "sel" : ri % 2 === 1 && ri < 10 ? "alt" : ""}"></div>`)}
              </div>
            </div>
            <div class="rec">
              <span class="lb">${k("レコード:")}</span><span class="nb">${I.first}</span><span class="nb">${I.prev}</span>
              <span class="cnt">1 / 10</span><span class="nb">${I.next}</span><span class="nb">${I.last}</span><span class="nb">${I.newr}</span>
              <span class="nf">${I.fno}<span>${k("フィルターなし")}</span></span><span class="srch">検索</span><span class="sb"></span>
            </div>
          </div>
        </div>
      </div>
      <div class="status"><span>${k("データシート ビュー")}</span><span class="v1">${I.ds}</span><span class="v2">${I.ds2}</span></div>
      <div class="task">
        <div class="tasktop"></div>
        <div class="taskmid">
          <div class="start">${I.win}</div><div class="srch2">ﾉ</div>
          <div class="arr">◂</div>
          <div class="track"><div class="thumb"></div></div>
          <div class="arr">▸</div><div class="taskend"></div>
        </div>
        <div class="ticks"></div>
        <div class="wf"><span>WonderFox HD Video Converter Factory Pro</span><i></i></div>
        <div class="tl">${I.tabL}</div><div class="tr">${I.tabR}</div>
        <div class="tabline"></div>
        <div class="dd">▾</div>
      </div>
    </div>

    <div class="dlg">
      <div class="dt">${I.rec}<span>${k("スクリーン レコーダー")}</span><div class="q"><span>?</span><span class="ln"></span>${I.closeD}</div></div>
      <div class="dm">
        <div class="left">
          <div class="ropts"><span class="radio on"></span><span class="o1">16:9</span><span class="radio"></span><span class="o2">4:3</span></div>
          <div class="btns"><div class="abtn w68">${I.area1}</div><div class="abtn w68">${I.area2}</div></div>
        </div>
        <div class="mid">
          <div class="mouse"><span>${k("マウス クリック:")}</span><i></i></div>
          <div class="midrow">
            <div class="spl"><div class="a">${I.split}</div><div class="b">${I.dchev}</div></div>
            <div class="dims"><div class="dim1"><span>1920</span></div><div class="dim2">1037</div></div>
            <div class="brk">${I.bracket}</div>
          </div>
        </div>
        <div class="recwrap"><div class="recb">REC</div></div>
      </div>
      <div class="db"><span class="set">設定</span><span class="ed">編集</span></div>
    </div>

    <div class="dashT"></div><div class="dashB"></div><div class="lineL"></div><div class="lineR"></div>
    ${["h1", "h2", "h3", "h4", "h5", "h6", "h7", "h8"].map((h) => html`<div class="hd ${h}"></div>`)}
    `;
  }
}
